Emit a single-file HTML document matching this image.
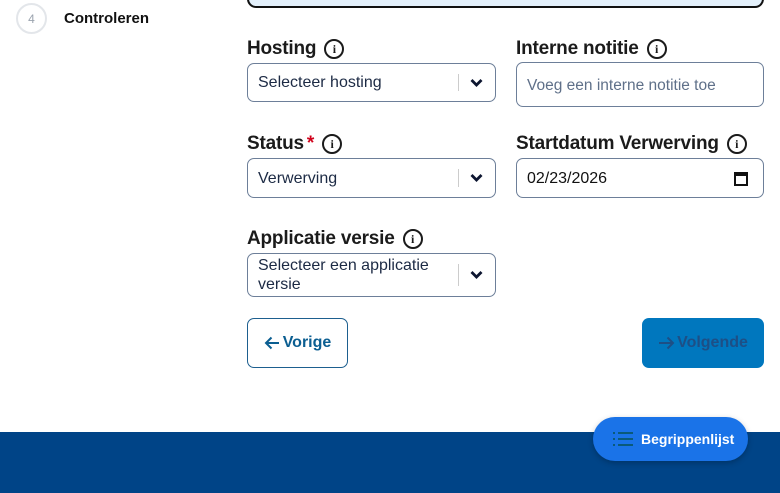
<!DOCTYPE html>
<html><head><meta charset="utf-8"><style>
*{box-sizing:border-box;margin:0;padding:0}
body{width:780px;height:493px;position:relative;overflow:hidden;background:#fff;font-family:"Liberation Sans",sans-serif;color:#1a1a1a}
.a{position:absolute}
.lbl{font-size:19px;font-weight:600;color:#1b1b1b;display:flex;align-items:center;gap:8px;white-space:nowrap;letter-spacing:-0.2px}
.info{width:20px;height:20px;border:2px solid #1b1b1b;border-radius:50%;display:inline-flex;align-items:center;justify-content:center;font-size:12px;font-weight:bold;font-family:"Liberation Serif",serif}
.box{border:1px solid #6d7f99;border-radius:7px;background:#fff;font-size:16px;color:#1c2a44;display:flex;align-items:center;padding-left:10px}
.sel .sep{position:absolute;right:36px;top:10px;bottom:10px;width:1px;background:#ccc}
.chev{position:absolute;right:12px;top:50%;margin-top:-5px}
</style></head><body>
<div class="a" style="left:247px;top:-10px;width:517px;height:18px;background:#e3f0fb;border:2px solid #111;border-radius:0 0 9px 9px"></div>
<div class="a" style="left:16px;top:3px;width:31px;height:31px;border:2px solid #e3e6ea;border-radius:50%;font-size:12px;color:#9aa3ae;display:flex;align-items:center;justify-content:center">4</div>
<div class="a" style="left:64px;top:10px;font-size:15px;font-weight:600;color:#111">Controleren</div>

<div class="a lbl" style="left:247px;top:38px">Hosting <span class="info">i</span></div>
<div class="a box sel" style="left:247px;top:63px;width:249px;height:39px">Selecteer hosting<span class="sep"></span><svg class="chev" width="13" height="10" viewBox="0 0 13 10"><path d="M1.5 2l5 5 5-5" stroke="#0c1530" stroke-width="2.8" fill="none"/></svg></div>

<div class="a lbl" style="left:516px;top:38px">Interne notitie <span class="info">i</span></div>
<div class="a box" style="left:516px;top:62px;width:248px;height:45px;color:#5f7089;font-size:15.5px;padding-top:2px">Voeg een interne notitie toe</div>

<div class="a lbl" style="left:247px;top:133px">Status<span style="color:#d0021b;margin-left:-5px">*</span> <span class="info">i</span></div>
<div class="a box sel" style="left:247px;top:158px;width:249px;height:40px;padding-top:2px">Verwerving<span class="sep"></span><svg class="chev" width="13" height="10" viewBox="0 0 13 10"><path d="M1.5 2l5 5 5-5" stroke="#0c1530" stroke-width="2.8" fill="none"/></svg></div>

<div class="a lbl" style="left:516px;top:133px">Startdatum Verwerving <span class="info">i</span></div>
<div class="a box" style="left:516px;top:158px;width:248px;height:40px;color:#111;padding-top:2px">02/23/2026<svg class="a" style="right:15px;top:12px" width="14" height="15" viewBox="0 0 14 15"><rect x="1" y="2" width="12" height="12" fill="none" stroke="#111" stroke-width="2"/><rect x="1" y="2" width="12" height="3" fill="#111"/></svg></div>

<div class="a lbl" style="left:247px;top:228px">Applicatie versie <span class="info">i</span></div>
<div class="a box sel" style="left:247px;top:253px;width:249px;height:44px;line-height:19px">Selecteer een applicatie<br>versie<span class="sep"></span><svg class="chev" width="13" height="10" viewBox="0 0 13 10"><path d="M1.5 2l5 5 5-5" stroke="#0c1530" stroke-width="2.8" fill="none"/></svg></div>

<div class="a" style="left:247px;top:318px;width:101px;height:50px;border:1px solid #1d5f8f;border-radius:7px;display:flex;align-items:center;justify-content:center;gap:3px;color:#0b5e91;font-size:16px;font-weight:600"><svg width="16" height="14" viewBox="0 0 16 14"><path d="M15 7H2M7.5 1.5L2 7l5.5 5.5" stroke="#0b5e91" stroke-width="2" fill="none"/></svg>Vorige</div>
<div class="a" style="left:642px;top:318px;width:122px;height:50px;background:#0077be;border-radius:7px;display:flex;align-items:center;justify-content:center;gap:2px;color:#1d4f86;font-size:16px;font-weight:600"><svg width="17" height="14" viewBox="0 0 17 14"><path d="M1 7h14M9.5 1.5L15 7l-5.5 5.5" stroke="#1d4f86" stroke-width="2" fill="none"/></svg>Volgende</div>

<div class="a" style="left:0;top:432px;width:780px;height:61px;background:#004487"></div>
<div class="a" style="left:593px;top:417px;width:155px;height:44px;background:#1a73e8;border-radius:22px;box-shadow:0 2px 6px rgba(0,0,0,.25);display:flex;align-items:center;padding-left:20px;gap:8px;color:#fff;font-size:14px;font-weight:bold">
<svg width="20" height="16" viewBox="0 0 20 16"><g stroke="#0a5a7a" stroke-width="2"><path d="M0 2h2M5 2h15M0 8h2M5 8h15M0 14h2M5 14h15"/></g></svg>Begrippenlijst</div>
</body></html>
